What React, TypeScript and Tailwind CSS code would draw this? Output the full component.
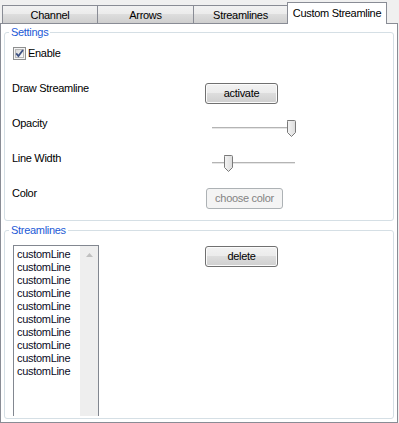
import React from 'react'

const tabs = [
  { id: 'channel', name: 'Channel', width: 'w-[96px]' },
  { id: 'arrows', name: 'Arrows', width: 'w-[97px]' },
  { id: 'streamlines', name: 'Streamlines', width: 'w-[95px]' },
]

const lines = Array.from({ length: 10 }, () => 'customLine')

function Button({ label, disabled = false, width }: { label: string; disabled?: boolean; width: string }) {
  return (
    <button
      disabled={disabled}
      className={
        disabled
          ? `${width} h-[21px] rounded-[3px] border border-[#adb2b5] bg-[#f4f4f4] text-[#838383] leading-[13px]`
          : `${width} h-[21px] rounded-[3px] border border-[#707070] bg-[linear-gradient(#f2f2f2_0%,#ebebeb_50%,#dddddd_50%,#cfcfcf_100%)] shadow-[inset_0_0_0_1px_#fbfbfb] text-black leading-[13px]`
      }
    >
      {label}
    </button>
  )
}

function Slider({ thumb }: { thumb: number }) {
  return (
    <div className="relative w-[95px] h-[19px] mt-[2px]">
      <div className="absolute left-[7px] right-[5px] top-[8px] h-[2px] border-t border-[#b4b4b4] bg-[#e6e6e6]" />
      <svg
        className="absolute top-[1px]"
        style={{ left: thumb }}
        width="11"
        height="18"
        viewBox="0 0 11 18"
      >
        <defs>
          <linearGradient id="thumbFill" x1="0" y1="0" x2="1" y2="0">
            <stop offset="0" stopColor="#f4f4f4" />
            <stop offset="1" stopColor="#dcdcdc" />
          </linearGradient>
        </defs>
        <path
          d="M1.5 0.5 H8.5 A1 1 0 0 1 9.5 1.5 V12.5 L5.5 16.5 L1.5 12.5 V1.5 A1 1 0 0 1 2.5 0.5 Z"
          fill="url(#thumbFill)"
          stroke="#7a7a7a"
        />
      </svg>
    </div>
  )
}

function Checkbox() {
  return (
    <svg width="13" height="13" viewBox="0 0 13 13" className="ml-px">
      <defs>
        <linearGradient id="cbFill" x1="0" y1="0" x2="1" y2="1">
          <stop offset="0" stopColor="#d6d6d6" />
          <stop offset="1" stopColor="#ffffff" />
        </linearGradient>
      </defs>
      <rect x="0.5" y="0.5" width="12" height="12" fill="#f4f4f4" stroke="#8e8f8f" />
      <rect x="2.5" y="2.5" width="8" height="8" fill="url(#cbFill)" stroke="#b8b8b8" />
      <path d="M3.2 6.4 L5.4 9 L10 3" fill="none" stroke="#3e5283" strokeWidth="1.8" />
    </svg>
  )
}

export default function App() {
  return (
    <div className="w-[399px] h-[423px] overflow-hidden bg-[#f0f0f0] text-[11px] tracking-[-0.3px] text-black font-['Liberation_Sans',Arial,sans-serif]">
      <div className="flex items-end h-[23px] pl-[2px]">
        {tabs.map((tab, index) => (
          <div
            key={tab.id}
            className={`${tab.width} ${index > 0 ? '-ml-px' : ''} h-[18px] flex items-center justify-center border-t border-x border-[#898c95] bg-[linear-gradient(#f2f2f2_0%,#ebebeb_50%,#dddddd_50%,#cfcfcf_100%)] leading-[13px] pt-[2px]`}
          >
            {tab.name}
          </div>
        ))}
        <div className="-ml-px relative z-10 -mb-px w-[100px] h-[22px] flex items-center justify-center border-t border-x border-[#898c95] bg-white leading-[13px] pb-[1px]">
          Custom Streamline
        </div>
      </div>

      <div className="w-[398px] h-[400px] border border-[#898c95] bg-white">
        <fieldset className="ml-[3px] mt-[2px] w-[390px] h-[195px] border border-[#d5dfe5] rounded-[3px] pl-[7px] pt-[8px]">
          <legend className="-ml-[3px] px-[2px] leading-[13px] text-[#1c5ad6]">Settings</legend>
          <label className="flex items-center h-[13px] gap-[2px]">
            <Checkbox />
            <span className="leading-[13px]">Enable</span>
          </label>

          <div className="flex h-[35px] mt-[22px]">
            <div className="w-[193px] leading-[13px]">Draw Streamline</div>
            <div className="mt-px">
              <Button label="activate" width="w-[73px]" />
            </div>
          </div>
          <div className="flex h-[35px]">
            <div className="w-[193px] leading-[13px]">Opacity</div>
            <Slider thumb={81} />
          </div>
          <div className="flex h-[35px]">
            <div className="w-[193px] leading-[13px]">Line Width</div>
            <Slider thumb={18} />
          </div>
          <div className="flex">
            <div className="w-[193px] leading-[13px]">Color</div>
            <div className="mt-px ml-px">
              <Button label="choose color" width="w-[77px]" disabled />
            </div>
          </div>
        </fieldset>

        <fieldset className="ml-[3px] mt-[3px] w-[390px] h-[195px] overflow-hidden border border-[#d5dfe5] rounded-[3px] pl-[8px] pt-[8px]">
          <legend className="-ml-[4px] px-[2px] leading-[13px] text-[#1c5ad6]">Streamlines</legend>
          <div className="flex items-start">
            <div className="flex w-[86px] h-[171px] border border-b-0 border-[#828790]">
              <ul className="flex-1 pl-[3px] pt-[2px] text-[#0a0a1e]">
                {lines.map((line, index) => (
                  <li key={index} className="leading-[13px]">
                    {line}
                  </li>
                ))}
              </ul>
              <div className="w-[18px] bg-[#eeeeee] flex justify-center pt-[7px]">
                <svg width="7" height="4" viewBox="0 0 7 4">
                  <path d="M0 4 L3.5 0 L7 4 Z" fill="#c0c0c0" />
                </svg>
              </div>
            </div>
            <div className="ml-[106px] mt-px">
              <Button label="delete" width="w-[73px]" />
            </div>
          </div>
        </fieldset>
      </div>
    </div>
  )
}
